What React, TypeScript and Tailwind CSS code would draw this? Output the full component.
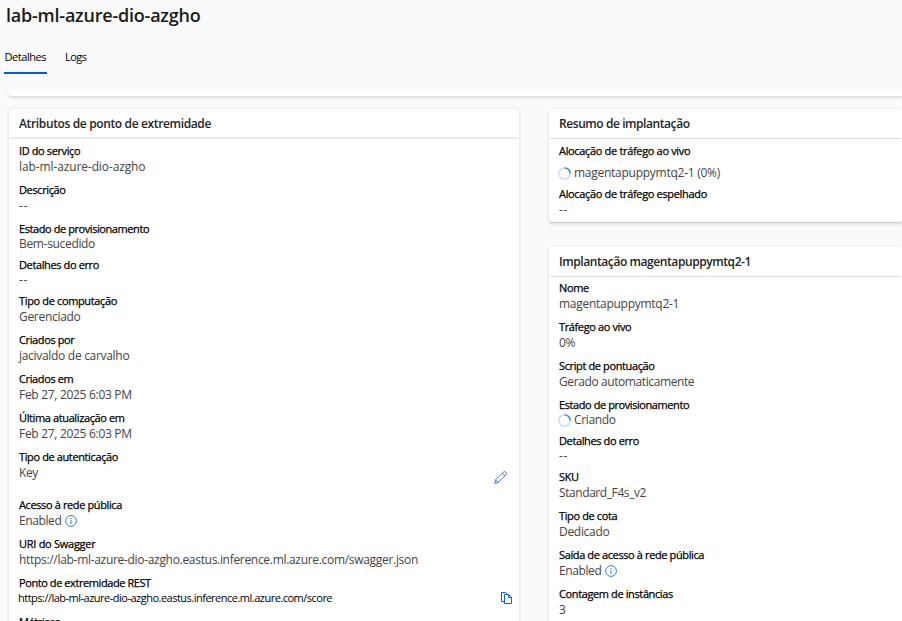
import type { ReactNode } from 'react';

const cardShadow = 'shadow-[0_1.6px_3.6px_rgba(0,0,0,0.13),0_0.3px_0.9px_rgba(0,0,0,0.11)]';

function InfoIcon() {
  return (
    <svg width="12" height="12" viewBox="0 0 12 12" fill="none" className="shrink-0">
      <circle cx="6" cy="6" r="5.4" stroke="#2f7bdc" strokeWidth="1" />
      <path d="M6 5v4M6 3v1.1" stroke="#2f7bdc" strokeWidth="1" />
    </svg>
  );
}

function Spinner() {
  return (
    <svg width="13" height="13" viewBox="0 0 13 13" fill="none" className="-ml-px mr-[3px] shrink-0">
      <circle cx="6.5" cy="6.5" r="5.7" stroke="#bfd9f7" strokeWidth="1.3" />
      <path d="M6.5 .8A5.7 5.7 0 0 1 12.2 6.5" stroke="#2f7bea" strokeWidth="1.3" />
    </svg>
  );
}

function PencilIcon() {
  return (
    <svg width="13" height="13" viewBox="0 0 13 13" fill="none" stroke="#2a68d4" strokeWidth="0.9" strokeLinejoin="round">
      <path d="M.7 12.3l.9-3.5L9.3 1.1a1.5 1.5 0 0 1 2.2 0l.4.4a1.5 1.5 0 0 1 0 2.2L4.2 11.4zM8.2 2.2l2.6 2.6M1.6 8.8l2.6 2.6" />
    </svg>
  );
}

function CopyIcon() {
  return (
    <svg width="11" height="12" viewBox="0 0 11 12" fill="none" stroke="#0f62d6" strokeWidth="1">
      <path d="M3 9.5H.5V.5h4l2 2" />
      <path d="M3.5 2.5h4l3 3v6h-7zM7.5 2.5v3h3" />
    </svg>
  );
}

type FieldProps = {
  label: string;
  children?: ReactNode;
  labelClass?: string;
  valueClass?: string;
  className?: string;
};

function Field({
  label,
  children,
  labelClass = 'tracking-[-0.38px]',
  valueClass = 'leading-4 tracking-[-0.3px]',
  className = 'h-[39px]',
}: FieldProps) {
  return (
    <div className={`shrink-0 whitespace-nowrap ${className}`}>
      <dt className={`h-4 text-[11px] font-medium leading-4 text-black [-webkit-text-stroke:0.25px_black] ${labelClass}`}>{label}</dt>
      <dd className={`flex items-center text-[12px] text-[#454443] ${valueClass}`}>{children}</dd>
    </div>
  );
}

const Empty = () => <span className="tracking-[0.6px]">--</span>;

function Card({ title, titleClass, className, children }: { title: string; titleClass: string; className: string; children: ReactNode }) {
  return (
    <section className={`flex flex-col rounded-[2px] bg-white ${cardShadow} ${className}`}>
      <h2 className={`mx-px shrink-0 pl-[9px] text-[12px] font-semibold text-[#242322] ${titleClass}`}>{title}</h2>
      <dl className="flex flex-col pl-[10px]">{children}</dl>
    </section>
  );
}

export default function App() {
  return (
    <div className="flex h-[621px] w-[902px] flex-col overflow-hidden bg-[#fafafa] font-['Open_Sans','Noto_Sans',sans-serif]">
      <header className="h-[91px] shrink-0">
        <h1 className="h-8 pl-1.5 text-[18px] font-semibold leading-[30px] tracking-[-0.22px] text-[#1b1a19]">lab-ml-azure-dio-azgho</h1>
        <nav className="mt-3 flex h-[30px] gap-[18px] pl-1 text-[11px] leading-[26px] text-black">
          <span className="w-[43px] border-b-2 border-[#015cda] pl-[0.5px] tracking-[-0.45px]">Detalhes</span>
          <span className="tracking-[-0.5px]">Logs</span>
        </nav>
      </header>

      <main className="flex min-h-0 grow flex-col overflow-hidden">
        <div className={`ml-2 h-[5px] shrink-0 rounded-bl-[3px] bg-white ${cardShadow}`} />
        <div className="mt-[13px] flex min-h-0 grow gap-[30px] pl-[9px]">
          <Card title="Atributos de ponto de extremidade" titleClass="h-[30px] border-b-2 border-[#e9e9e9] leading-[30px] tracking-[-0.36px]" className="h-[560px] w-[510px] shrink-0">
            <div className="h-1" />
            <Field label="ID do serviço" valueClass="leading-4 tracking-[-0.11px]">lab-ml-azure-dio-azgho</Field>
            <Field label="Descrição"><Empty /></Field>
            <Field label="Estado de provisionamento" className="h-9" labelClass="tracking-[-0.42px]" valueClass="leading-[14px] tracking-[-0.33px]">Bem-sucedido</Field>
            <Field label="Detalhes do erro" className="h-9" valueClass="leading-[14px]"><Empty /></Field>
            <Field label="Tipo de computação" labelClass="tracking-[-0.355px]">Gerenciado</Field>
            <Field label="Criados por">jacivaldo de carvalho</Field>
            <Field label="Criados em">Feb 27, 2025 6:03 PM</Field>
            <Field label="Última atualização em">Feb 27, 2025 6:03 PM</Field>
            <Field label="Tipo de autenticação" className="h-12" valueClass="h-4 leading-4 tracking-[-0.4px] justify-between pr-3">
              Key
              <span className="mt-2"><PencilIcon /></span>
            </Field>
            <Field label="Acesso à rede pública" valueClass="h-4 leading-4 tracking-[-0.4px] gap-[3.5px]">
              Enabled <InfoIcon />
            </Field>
            <Field label="URI do Swagger" labelClass="tracking-[-0.27px]" valueClass="leading-4 tracking-[-0.308px]">
              https://lab-ml-azure-dio-azgho.eastus.inference.ml.azure.com/swagger.json
            </Field>
            <Field label="Ponto de extremidade REST" labelClass="tracking-[-0.42px]" valueClass="-ml-px h-[14px] leading-[14px] justify-between pr-[7px]">
              <span className="text-[11px] tracking-[-0.505px] text-black">https://lab-ml-azure-dio-azgho.eastus.inference.ml.azure.com/score</span>
              <CopyIcon />
            </Field>
            <Field label="Métricas" />
          </Card>

          <div className="flex min-w-0 grow flex-col gap-6">
            <Card title="Resumo de implantação" titleClass="h-[30px] border-b border-[#dcdcdc] leading-[30px] tracking-[-0.43px]" className="h-[113px] shrink-0">
              <div className="h-1" />
              <Field label="Alocação de tráfego ao vivo" className="h-[43px]" labelClass="tracking-[-0.33px]" valueClass="mt-1.5 h-4 leading-4 tracking-[-0.26px]">
                <Spinner /> magentapuppymtq2-1 (0%)
              </Field>
              <Field label="Alocação de tráfego espelhado" labelClass="tracking-[-0.33px]"><Empty /></Field>
            </Card>
            <Card title="Implantação magentapuppymtq2-1" titleClass="h-[31px] border-b border-[#dcdcdc] leading-[32px] tracking-[-0.42px]" className="h-[440px] shrink-0">
              <div className="h-[3px]" />
              <Field label="Nome" valueClass="leading-4 tracking-[-0.27px]">magentapuppymtq2-1</Field>
              <Field label="Tráfego ao vivo">0%</Field>
              <Field label="Script de pontuação" valueClass="leading-4 tracking-[-0.4px]">Gerado automaticamente</Field>
              <Field label="Estado de provisionamento" className="h-9" labelClass="tracking-[-0.42px]" valueClass="h-[14px] leading-[14px] tracking-[-0.36px]">
                <Spinner /> Criando
              </Field>
              <Field label="Detalhes do erro" className="h-9" valueClass="leading-[14px]"><Empty /></Field>
              <Field label="SKU" valueClass="leading-4 tracking-[-0.42px]">Standard_F4s_v2</Field>
              <Field label="Tipo de cota">Dedicado</Field>
              <Field label="Saída de acesso à rede pública" valueClass="h-4 leading-4 tracking-[-0.4px] gap-[3.5px]">
                Enabled <InfoIcon />
              </Field>
              <Field label="Contagem de instâncias">3</Field>
            </Card>
          </div>
        </div>
      </main>
    </div>
  );
}
